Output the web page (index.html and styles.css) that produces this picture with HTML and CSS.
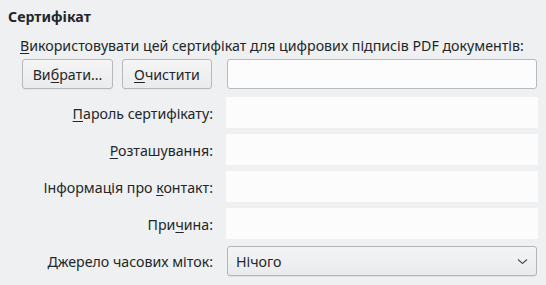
FILE: index.html
```html
<!DOCTYPE html>
<html lang="uk">
<head>
<meta charset="utf-8">
<link rel="stylesheet" href="styles.css">
</head>
<body>
<div class="page">
  <div class="title">Сертифікат</div>
  <div class="desc"><u>В</u>икористовувати цей сертифікат для цифрових підписів PDF документів:</div>
  <div class="grid">
    <div class="btns">
      <button class="btn b1">Ви<u>б</u>рати...</button>
      <button class="btn b2"><u>О</u>чистити</button>
    </div>
    <div class="cell"><div class="entry"></div></div>

    <div class="label"><span><u>П</u>ароль сертифікату:</span></div>
    <div class="field"></div>

    <div class="label"><span><u>Р</u>озташування:</span></div>
    <div class="field"></div>

    <div class="label"><span>Інформація про <u>к</u>онтакт:</span></div>
    <div class="field"></div>

    <div class="label"><span>При<u>ч</u>ина:</span></div>
    <div class="field"></div>

    <div class="label"><span><u>Д</u>жерело часових міток:</span></div>
    <div class="cell">
      <div class="combo">
        <span>Нічого</span>
        <svg class="chev" width="11" height="7" viewBox="0 0 11 7"><path d="M1 1.5 L5.5 5.5 L10 1.5" fill="none" stroke="#4d4f52" stroke-width="1.1"/></svg>
      </div>
    </div>
  </div>
</div>
</body>
</html>
```
FILE: styles.css
```css
html, body {
  margin: 0;
  padding: 0;
  background: #eff0f1;
}
body {
  width: 546px;
  height: 285px;
  overflow: hidden;
  font-family: "Noto Sans", "DejaVu Sans", sans-serif;
  font-size: 14.2px;
  color: #232629;
}
u {
  text-decoration: underline;
  text-underline-offset: 2px;
}
.page {
  padding: 7px 0 0 8px;
}
.title {
  font-weight: bold;
  line-height: 20px;
  height: 20px;
}
.desc {
  margin-top: 9px;
  padding-left: 12px;
  line-height: 20px;
  height: 20px;
  white-space: nowrap;
}
.grid {
  margin-top: 3px;
  display: grid;
  grid-template-columns: 205px 312px;
  column-gap: 13px;
  grid-template-rows: 32px 31px 31px 31px 31px 31px;
  row-gap: 6px;
}
.btns {
  display: flex;
  gap: 9px;
  padding-left: 14px;
  align-items: flex-start;
}
.btn {
  height: 30px;
  font: inherit;
  color: inherit;
  background: linear-gradient(#f5f5f6, #eaebec);
  border: 1px solid #b7b8b9;
  border-radius: 3px;
  padding: 0;
  box-shadow: 0 1px 0 rgba(0,0,0,0.04);
}
.b1 { width: 91px; }
.b2 { width: 90px; }
.cell {
  display: flex;
  align-items: flex-start;
}
.entry {
  margin: 0 1px;
  flex: 1;
  height: 28px;
  background: #fcfcfc;
  border: 1px solid #b9babb;
  border-radius: 3px;
}
.label {
  display: flex;
  align-items: center;
  justify-content: flex-end;
  white-space: nowrap;
  padding-top: 1px;
}
.field {
  background: #fcfcfc;
}
.combo {
  margin: 1px 1px 0;
  flex: 1;
  height: 28px;
  border: 1px solid #b4b5b6;
  border-radius: 3px;
  background: linear-gradient(#f3f4f5, #eaebec);
  display: flex;
  align-items: center;
  justify-content: space-between;
  padding: 0 8px 0 8px;
  box-shadow: 0 1px 0 rgba(0,0,0,0.06);
}
.chev {
  display: block;
  margin-top: 1px;
}
```
